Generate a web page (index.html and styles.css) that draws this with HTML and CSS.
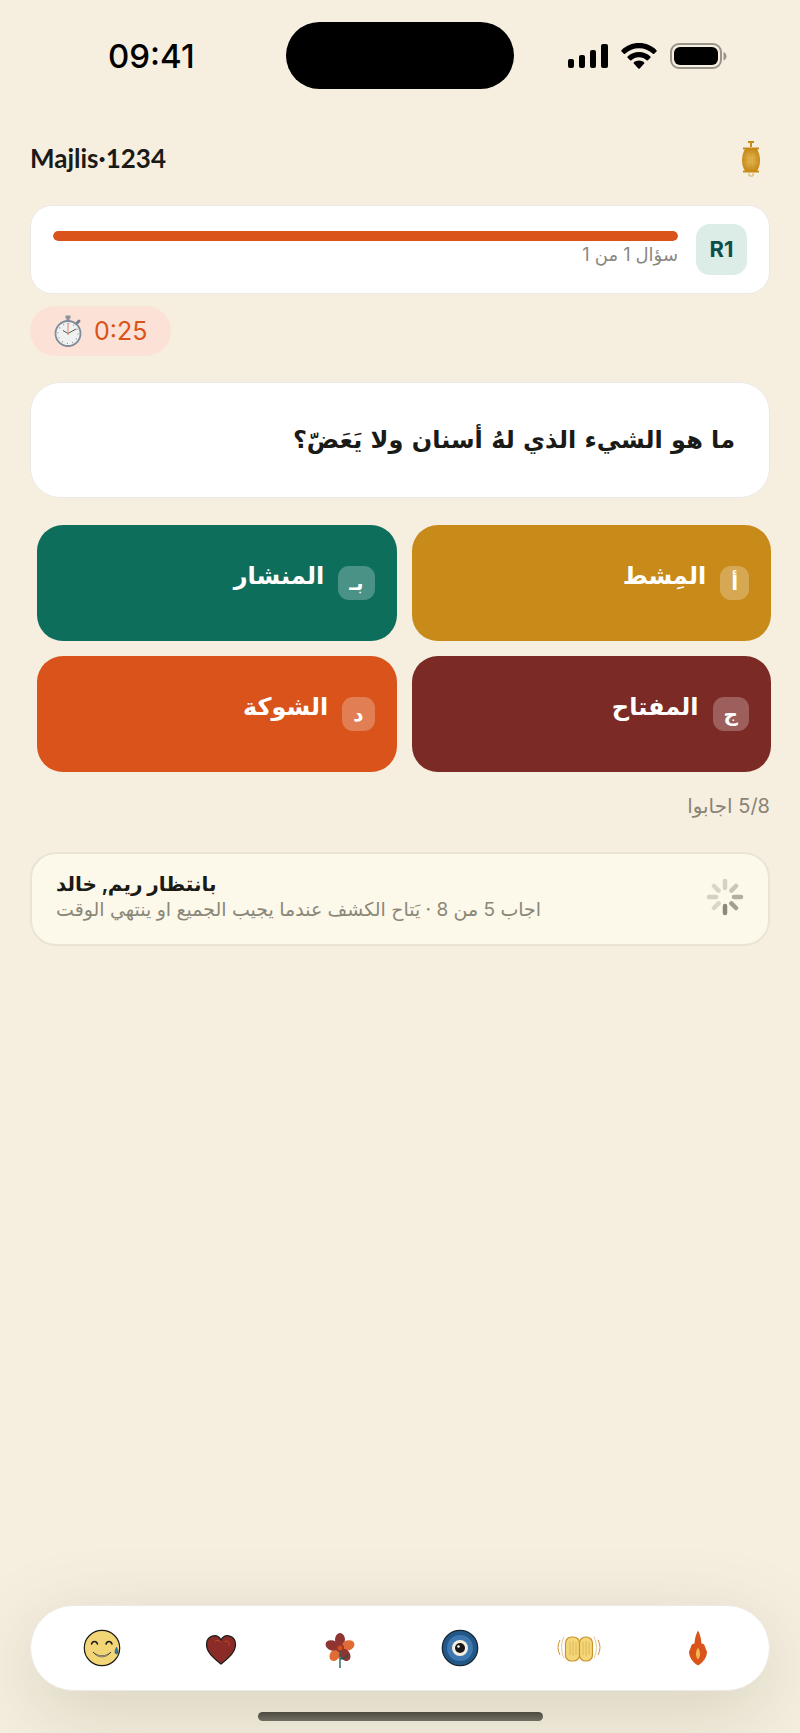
FILE: index.html
```
<!DOCTYPE html>
<html lang="ar">

<head>
    <meta charset="UTF-8">
    <meta name="viewport" content="width=device-width, initial-scale=1.0">
    <title>Majlis</title>
    <link rel="stylesheet" href="styles.css">
</head>

<body>
    <div class="status-bar">
        <time class="clock">09:41</time>
        <div class="island"></div>
        <div class="status-icons">
            <svg width="40" height="26" viewBox="0 0 40 26">
                <rect x="0" y="16" width="6" height="9" rx="2"></rect>
                <rect x="11" y="12" width="6" height="13" rx="2"></rect>
                <rect x="22" y="7" width="6" height="18" rx="2"></rect>
                <rect x="33" y="1" width="7" height="24" rx="2"></rect>
            </svg>
            <svg width="36" height="26" viewBox="0 0 36 26">
                <path d="M18 0C11 0 4.800 2.700.5 7.200c-.4.400-.4.900 0 1.300l2.300 2.300c.4.400.9.400 1.300 0C7.800 7.200 12.700 5.200 18 5.200s10.200 2 13.900 5.600c.4.400.9.400 1.300 0l2.300-2.300c.4-.4.400-.9 0-1.300C31.200 2.700 25 0 18 0z"></path>
                <path d="M18 9c-4.400 0-8.400 1.700-11.400 4.500-.4.400-.4.900 0 1.300l2.500 2.400c.4.400.9.400 1.300 0 2-1.800 4.700-3 7.600-3s5.600 1.200 7.600 3c.4.400.9.400 1.300 0l2.500-2.400c.4-.4.400-.9 0-1.300C26.400 10.700 22.400 9 18 9z"></path>
                <path d="M18 17.500c-2 0-3.800.7-5.200 1.900-.4.400-.4.800 0 1.200l4.500 4.900c.4.400 1 .4 1.400 0l4.500-4.900c.4-.4.400-.8 0-1.200-1.400-1.200-3.200-1.900-5.200-1.900z"></path>
            </svg>
            <svg width="57" height="26" viewBox="0 0 57 26">
                <rect x="1" y="1" width="50" height="24" rx="8" fill="none" stroke="#99958a" stroke-width="2"></rect>
                <rect x="4" y="4" width="44" height="18" rx="6"></rect>
                <path d="M53.500 9v8.500c4-1.500 4-7 0-8.500z" fill="#99958a"></path>
            </svg>
        </div>
    </div>

    <header class="header">
        <h1>Majlis·1234</h1>
        <svg class="lantern" width="20" height="36" viewBox="0 0 20 36">
            <defs>
                <radialGradient id="glow">
                    <stop offset="0" stop-color="#e6bd5c"></stop>
                    <stop offset="1" stop-color="#c88b1a"></stop>
                </radialGradient>
            </defs>
            <path d="M7 1h6M10 1v5" stroke="#c88b1a" stroke-width="2"></path>
            <path d="M4 8h12c4 7 4 16 0 22H4C0 24 0 15 4 8z" fill="url(#glow)"></path>
            <path d="M2 7.500h16M2 30.500h16" stroke="#c88b1a" stroke-width="2"></path>
            <path d="M2 19h16M10 9v20" stroke="#c88b1a" stroke-width="1" opacity=".4"></path>
            <path d="M8 32v3h4v-3" fill="none" stroke="#dcae50"></path>
        </svg>
    </header>

    <main>
        <section class="card round-card">
            <div class="round-info">
                <div class="progress">
                    <div class="progress-fill" style="width: 100%"></div>
                </div>
                <p dir="rtl">سؤال 1 من 1</p>
            </div>
            <div class="round-badge">R1</div>
        </section>

        <div class="timer">
            <svg width="28" height="32" viewBox="0 0 28 32">
                <path d="M11.500 2h5M14 2v5" stroke="#8c949e" stroke-width="3"></path>
                <path d="M23 8l2-2" stroke="#77828f" stroke-width="3" stroke-linecap="round"></path>
                <circle cx="14" cy="18.500" r="12.500" fill="#f0f1f1" stroke="#808b98" stroke-width="1.800"></circle>
                <circle cx="14" cy="18.500" r="10" fill="none" stroke="#8d9194" stroke-width="1.200" stroke-dasharray="1 4.236"></circle>
                <path d="M9 15.500l5 3 8-4.500" fill="none" stroke="#555" stroke-width="1"></path>
                <path d="M14 20V8" stroke="#ef8061" stroke-width="1"></path>
            </svg>
            <span>0:25</span>
        </div>

        <h2 class="card question" dir="rtl">ما هو الشيء الذي لهُ أسنان ولا يَعَضّ؟</h2>

        <section class="answers" dir="rtl">
            <button class="answer gold" type="button"><span class="letter">أ</span><span>المِشط</span></button>
            <button class="answer green" type="button"><span class="letter">بـ</span><span>المنشار</span></button>
            <button class="answer maroon" type="button"><span class="letter">ج</span><span>المفتاح</span></button>
            <button class="answer orange" type="button"><span class="letter">د</span><span>الشوكة</span></button>
        </section>

        <p class="answered" dir="rtl">5/8 اجابوا</p>

        <section class="card waiting">
            <div>
                <h3 dir="rtl">بانتظار ريم, خالد</h3>
                <p dir="rtl">اجاب 5 من 8 · يَتاح الكشف عندما يجيب الجميع او ينتهي الوقت</p>
            </div>
            <svg width="38" height="38" viewBox="-19 -19 38 38" stroke="#8c897c" stroke-width="4.500" stroke-linecap="round">
                <path d="M0 9v7"></path>
                <path d="M6.400 6.400l4.600 4.600" opacity=".8"></path>
                <path d="M9 0h7" opacity=".65"></path>
                <path d="M6.400-6.400l4.600-4.600" opacity=".45"></path>
                <path d="M0-9v-7" opacity=".35"></path>
                <path d="M-6.400-6.400l-4.600-4.600" opacity=".3"></path>
                <path d="M-9 0h-7" opacity=".35"></path>
                <path d="M-6.400 6.400l-4.600 4.600" opacity=".3"></path>
            </svg>
        </section>
    </main>

    <nav class="reactions">
        <button type="button" aria-label="laugh">
            <svg width="44" height="44" viewBox="0 0 44 44">
                <circle cx="22" cy="22" r="17.700" fill="#f2d675" stroke="#1a1a17" stroke-width="1.200"></circle>
                <path d="M11.500 18c1-3.500 5-3.500 6 0M26 18c1-3.500 5-3.500 6 0" fill="none" stroke="#1a1a17" stroke-width="1.500" stroke-linecap="round"></path>
                <path d="M13 26c5 5 13 5 18 0-5 6.500-13 6.500-18 0z" fill="#fff" stroke="#1a1a17" stroke-width=".6"></path>
                <path d="M36.500 21c-2.200 4-2 7 0 7s2.200-3 0-7z" fill="#2e75a3" stroke="#24618a" stroke-width=".5"></path>
            </svg>
        </button>
        <button type="button" aria-label="heart">
            <svg width="44" height="44" viewBox="0 0 44 44">
                <path d="M22 38C16 33 7.500 27 7.500 18.500c0-9 10.500-12 14.500-4.500 4-7.500 14.500-4.500 14.500 4.500C36.500 27 28 33 22 38z" fill="#8a2b28" stroke="#1a1a17" stroke-width="1.200"></path>
                <path d="M16 16c1-2 4-2.500 5.500 0M25.500 15.500c3-1.500 5 1 4.500 4" fill="none" stroke="#d9531a" stroke-width=".8"></path>
            </svg>
        </button>
        <button type="button" aria-label="flower">
            <svg width="44" height="44" viewBox="0 0 44 44">
                <g transform="translate(22 22)">
                    <ellipse cy="-8.500" rx="5" ry="6.500" fill="#8f3531"></ellipse>
                    <ellipse cy="-8.500" rx="5" ry="6.500" transform="rotate(72)" fill="#df6b36"></ellipse>
                    <ellipse cy="-8.500" rx="5" ry="6.500" transform="rotate(144)" fill="#8f3531"></ellipse>
                    <ellipse cy="-8.500" rx="5" ry="6.500" transform="rotate(216)" fill="#df6b36"></ellipse>
                    <ellipse cy="-8.500" rx="5" ry="6.500" transform="rotate(288)" fill="#8f3531"></ellipse>
                    <circle r="4" fill="#8f3531"></circle>
                    <path d="M0 3v17M0 11q6 0 8-5" fill="none" stroke="#17594f" stroke-width="1.300"></path>
                    <circle r="2.500" fill="#d9531a" stroke="#b33c22"></circle>
                </g>
            </svg>
        </button>
        <button type="button" aria-label="evil eye">
            <svg width="44" height="44" viewBox="0 0 44 44">
                <circle cx="22" cy="22" r="17.700" fill="#225888" stroke="#172733" stroke-width="1.300"></circle>
                <circle cx="22" cy="22" r="13" fill="#3d78b0"></circle>
                <circle cx="22" cy="22" r="8" fill="#f6efe0"></circle>
                <circle cx="22" cy="22" r="5" fill="#171717"></circle>
                <circle cx="20.500" cy="20.500" r="1.300" fill="#fff"></circle>
            </svg>
        </button>
        <button type="button" aria-label="clap">
            <svg width="44" height="44" viewBox="0 0 44 44" fill="none" stroke="#ca942c">
                <rect x="8.500" y="11" width="14" height="24" rx="6" fill="#f4d77a" stroke-width="1.200"></rect>
                <rect x="22.500" y="11" width="13" height="24" rx="6" fill="#f4d77a" stroke-width="1.200"></rect>
                <path d="M13 16v13M16 15v15M19 16v13M26 16v13M29 15v15M32 16v13" stroke-width=".5"></path>
                <path d="M3 14q-4 7.500 0 15M41 14q4 7.500 0 15" stroke-width="1"></path>
                <path d="M7 10.500q-5 11 0 22M37 10.500q5 11 0 22" stroke-width=".5"></path>
            </svg>
        </button>
        <button type="button" aria-label="fire">
            <svg width="44" height="44" viewBox="0 0 44 44">
                <path d="M22 4.500c-3 6-3 9-3.500 13-4 0-3 4-5.500 8 0 6 4 11 9 14 5-3 9-8 9-14-2.500-4-1.500-8-5.500-8-.5-4-.5-7-3.500-13z" fill="#d9531a"></path>
                <path d="M22 21.500c-3 5-2.500 9 0 12 2.500-3 3-7 0-12z" fill="#edb854"></path>
            </svg>
        </button>
    </nav>
    <div class="home-indicator"></div>
</body>

</html>
```
FILE: styles.css
```
*,
*::before,
*::after {
    box-sizing: border-box;
}

body {
    margin: 0;
    padding: 0 30px 12px;
    min-height: 100vh;
    display: flex;
    flex-direction: column;
    background: #f6efe0;
    color: #1a1a17;
    font-family: Inter, "DejaVu Sans", sans-serif;
}

h1,
h2,
h3,
p {
    margin: 0;
}

button {
    border: 0;
    font-family: inherit;
    cursor: pointer;
}

svg {
    display: block;
    flex: none;
}

.status-bar {
    display: grid;
    grid-template-columns: 1fr 228px 1fr;
    align-items: center;
    padding-top: 22px;
}

.clock {
    padding-left: 78px;
    font-size: 33px;
    font-weight: 500;
    color: #000;
}

.island {
    height: 67px;
    border-radius: 34px;
    background: #000;
}

.status-icons {
    display: flex;
    justify-content: flex-end;
    gap: 13px;
    padding-right: 43px;
}

.header {
    display: flex;
    justify-content: space-between;
    align-items: flex-start;
    margin-top: 52px;
    padding-right: 9px;
}

.header h1 {
    font-family: Lato, sans-serif;
    font-size: 26px;
    line-height: 34px;
    font-weight: 700;
}

.card {
    background: #fff;
    border: 1px solid #eceae6;
    border-radius: 30px;
}

.round-card {
    display: flex;
    gap: 18px;
    margin-top: 28px;
    padding: 18px 22px;
    border-radius: 22px;
}

.round-info {
    flex: 1;
    padding-top: 7px;
}

.round-info p {
    margin-top: 2px;
    font-size: 18px;
    line-height: 24px;
    color: #8a877f;
}

.progress {
    height: 10px;
    border-radius: 5px;
    background: #f1e9dc;
    overflow: hidden;
}

.progress-fill {
    height: 100%;
    border-radius: 5px;
    background: #d9531a;
}

.round-badge {
    width: 51px;
    height: 51px;
    border-radius: 14px;
    background: #dcece7;
    color: #0f4f4a;
    font-size: 22px;
    font-weight: 700;
    line-height: 51px;
    text-align: center;
}

.timer {
    display: flex;
    align-items: center;
    gap: 12px;
    width: max-content;
    height: 50px;
    margin-top: 12px;
    padding: 0 24px;
    border-radius: 25px;
    background: #fce2d6;
    color: #d9531a;
    font-size: 25px;
}

.question {
    margin-top: 26px;
    padding: 36px 34px;
    font-family: "DejaVu Sans", sans-serif;
    font-size: 24px;
    line-height: 42px;
    font-weight: 700;
}

.answers {
    display: grid;
    grid-template-columns: 1fr 1fr;
    gap: 15px;
    margin: 27px -1px 0 7px;
}

.answer {
    display: flex;
    align-items: flex-start;
    gap: 14px;
    padding: 41px 22px;
    border-radius: 26px;
    color: #fff;
    font-size: 24px;
    line-height: 20px;
    font-weight: 700;
}

.letter {
    padding: 0 11px;
    border-radius: 11px;
    background: rgba(255, 255, 255, 0.25);
    font-size: 20px;
    line-height: 34px;
}

.gold {
    background: #c88b1a;
}

.green {
    background: #0e6e5c;
}

.maroon {
    background: #7b2a25;
}

.orange {
    background: #d9531a;
}

.answered {
    margin-top: 20px;
    font-size: 20px;
    line-height: 28px;
    color: #8a8376;
}

.waiting {
    display: flex;
    justify-content: space-between;
    align-items: center;
    margin-top: 32px;
    padding: 17px 24px 21px;
    background: #fcf8ea;
    border: 2px solid #e9e4d6;
    border-radius: 26px;
}

.waiting h3,
.waiting p {
    line-height: 26px;
    text-align: left;
}

.waiting h3 {
    font-size: 20px;
}

.waiting p {
    font-size: 19px;
    color: #8a8778;
}

.reactions {
    display: grid;
    grid-template-columns: repeat(6, 1fr);
    margin-top: auto;
    padding: 20px 11px;
    border-radius: 43px;
    border: 1px solid #eceae6;
    background: #fff;
    box-shadow: 0 20px 80px rgba(90, 90, 50, 0.2);
}

.reactions button {
    display: grid;
    place-items: center;
    padding: 0;
    background: none;
}

.home-indicator {
    width: 285px;
    height: 9px;
    margin: 21px auto 0;
    border-radius: 5px;
    background: linear-gradient(#4d4a41, #716d62);
}
```
